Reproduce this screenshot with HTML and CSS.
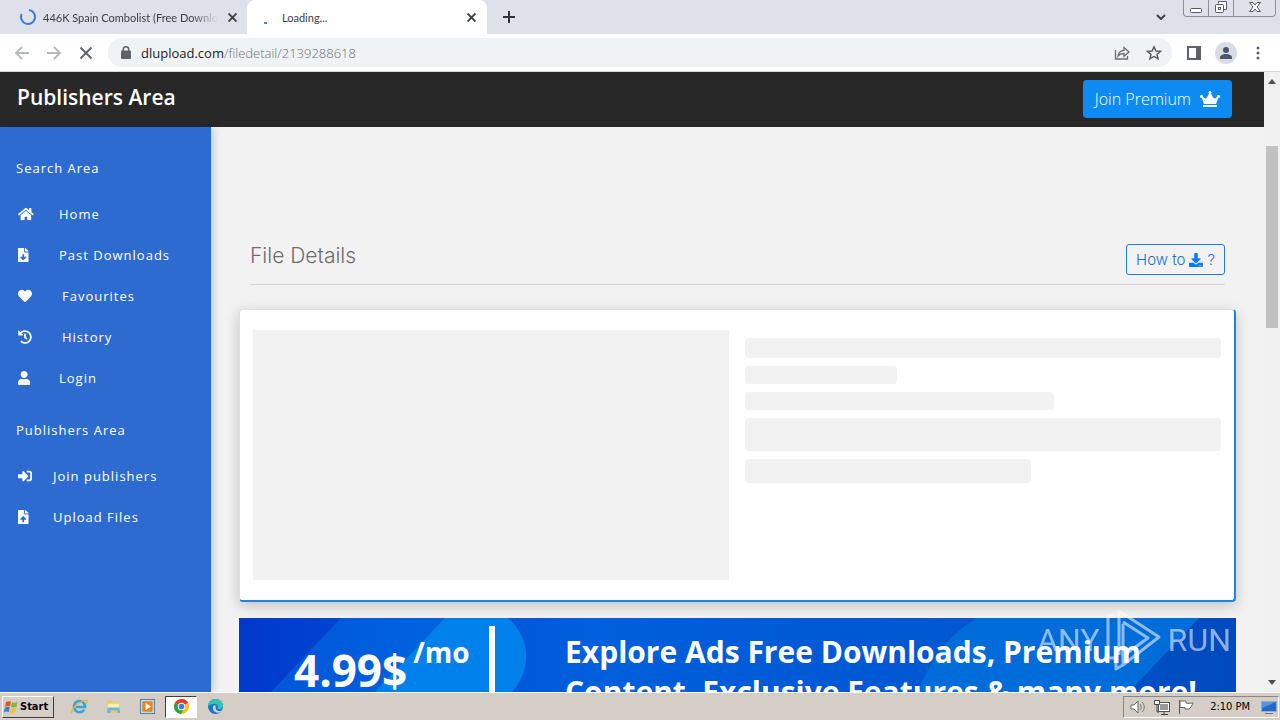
FILE: index.html
```html
<!DOCTYPE html>
<html lang="en">
<head>
    <meta charset="UTF-8">
    <meta name="viewport" content="width=device-width, initial-scale=1.0">
    <title>File Details</title>
    <link rel="stylesheet" href="styles.css">
</head>
<body>

<!-- Browser tabs -->
<div class="tabs">
    <div class="tab">
        <svg class="spinner" viewBox="0 0 16 16"><path d="M9 1A7 7 0 1 1 1.600 5.200" fill="none" stroke="#3f78d0" stroke-width="2"/></svg>
        <span class="tab-title fade">446K Spain Combolist (Free Download)</span>
        <button class="tab-close" aria-label="Close tab"><svg viewBox="0 0 8 8"><path d="M0.500 0.500l7 7M7.500 0.500l-7 7" stroke="#3c4043" stroke-width="1.700"/></svg></button>
    </div>
    <div class="tab active">
        <svg class="spinner" viewBox="0 0 16 16"><rect x="0" y="13" width="3" height="2" fill="#5b7fd0"/></svg>
        <span class="tab-title">Loading...</span>
        <button class="tab-close" aria-label="Close tab"><svg viewBox="0 0 8 8"><path d="M0.500 0.500l7 7M7.500 0.500l-7 7" stroke="#3c4043" stroke-width="1.700"/></svg></button>
    </div>
    <button class="new-tab" aria-label="New tab"><svg viewBox="0 0 12 12"><path d="M6 0v12M0 6h12" stroke="#30343a" stroke-width="2"/></svg></button>
    <button class="tab-search" aria-label="Search tabs"><svg viewBox="0 0 10 6"><path d="M1 1l4 4 4-4" fill="none" stroke="#3c4043" stroke-width="2"/></svg></button>
    <div class="window-buttons">
        <button class="win-small" aria-label="Minimize"><svg viewBox="0 0 16 14"><rect x="2.500" y="8.500" width="11" height="4" rx="1" fill="#fff" stroke="#555b68"/></svg></button>
        <button class="win-small" aria-label="Restore"><svg viewBox="0 0 16 14"><path d="M5.500 3.500v-2h8v8h-3" fill="#fff" stroke="#555b68"/><rect x="2.500" y="4.500" width="8" height="8" rx="1" fill="#fff" stroke="#555b68"/><rect x="5.500" y="7.500" width="2" height="2" fill="none" stroke="#555b68"/></svg></button>
        <button class="win-close" aria-label="Close"><svg viewBox="0 0 16 14"><path d="M2.500 2.500h3.500l2 2.500 2-2.500h3.500L10 7l3.500 4.500H10L8 9l-2 2.500H2.500L6 7z" fill="#fff" stroke="#555b68"/></svg></button>
    </div>
</div>

<!-- Address bar -->
<div class="toolbar">
    <div class="nav-tools">
        <button class="tool" aria-label="Back"><svg viewBox="0 0 16 16"><path d="M15 8H2M8 2L2 8l6 6" fill="none" stroke="#b5b7ba" stroke-width="1.800"/></svg></button>
        <button class="tool" aria-label="Forward"><svg viewBox="0 0 16 16"><path d="M1 8h13M8 2l6 6-6 6" fill="none" stroke="#b5b7ba" stroke-width="1.800"/></svg></button>
        <button class="tool" aria-label="Stop"><svg viewBox="0 0 16 16"><path d="M2.500 2.500l11 11M13.500 2.500l-11 11" fill="none" stroke="#5f6368" stroke-width="1.900"/></svg></button>
    </div>
    <div class="address">
        <svg class="lock" viewBox="0 0 10 13"><rect y="4.500" width="10" height="8.500" rx="1" fill="#5f6368"/><path d="M2.300 5V3.500a2.700 2.700 0 0 1 5.400 0V5" fill="none" stroke="#5f6368" stroke-width="1.500"/></svg>
        <div class="url"><b>dlupload.com</b>/filedetail/2139288618</div>
        <button class="tool" aria-label="Share"><svg viewBox="0 0 16 16"><path d="M1.500 5v9h12v-3" fill="none" stroke="#6b6f74" stroke-width="1.300"/><path d="M4 11c.5-4 2.500-5.500 6-5.700V2.500L15 7l-5 4.300V8.500C7.500 8.400 5.600 9 4 11z" fill="none" stroke="#6b6f74" stroke-width="1.300"/></svg></button>
        <button class="tool" aria-label="Bookmark"><svg viewBox="0 0 16 16"><path d="M8 1.800l1.900 4.200 4.600.4-3.500 3 1.100 4.500L8 11.500l-4.100 2.400L5 9.400l-3.500-3 4.600-.4z" fill="none" stroke="#55595e" stroke-width="1.400"/></svg></button>
    </div>
    <div class="menu-tools">
        <button class="tool" aria-label="Side panel"><svg viewBox="0 0 16 16"><path d="M1 1h14v14H1zM3 3v10h7V3z" fill="#5f6368" fill-rule="evenodd"/></svg></button>
        <button class="tool profile" aria-label="Profile"><svg viewBox="0 0 22 22"><circle cx="11" cy="11" r="11" fill="#d8dce3"/><circle cx="11" cy="8" r="3" fill="#4c566e"/><path d="M5 17v-1.500c0-2 3-3.500 6-3.500s6 1.500 6 3.500V17z" fill="#4c566e"/></svg></button>
        <button class="tool" aria-label="Menu"><svg viewBox="0 0 16 16"><circle cx="8" cy="3" r="1.500" fill="#5f6368"/><circle cx="8" cy="8" r="1.500" fill="#5f6368"/><circle cx="8" cy="13" r="1.500" fill="#5f6368"/></svg></button>
    </div>
</div>

<!-- Page -->
<div class="window">
    <div class="page">
        <header class="header">
            <h1>Publishers Area</h1>
            <button class="premium">Join Premium
                <svg viewBox="0 0 640 512"><path d="M528 448H112c-8.800 0-16 7.200-16 16v32c0 8.800 7.200 16 16 16h416c8.800 0 16-7.200 16-16v-32c0-8.800-7.200-16-16-16zm64-320c-26.500 0-48 21.500-48 48 0 7.100 1.600 13.700 4.400 19.800L476 239.200c-15.400 9.200-35.300 4-44.200-11.600L350.300 85C361 76.200 368 63 368 48c0-26.500-21.500-48-48-48s-48 21.500-48 48c0 15 7 28.200 17.700 37l-81.500 142.600c-8.900 15.600-28.900 20.800-44.200 11.600l-72.300-43.400c2.700-6 4.400-12.700 4.400-19.800 0-26.500-21.500-48-48-48S0 149.500 0 176s21.500 48 48 48c2.600 0 5.200-.4 7.700-.8L128 416h384l72.300-192.800c2.500.4 5.100.8 7.700.8 26.500 0 48-21.500 48-48s-21.500-48-48-48z"/></svg>
            </button>
        </header>
        <div class="body">
            <nav class="sidebar">
                <h2>Search Area</h2>
                <a href="#"><svg viewBox="0 0 576 512"><path d="M280.370 148.260L96 300.110V464a16 16 0 0 0 16 16l112.060-.29a16 16 0 0 0 15.920-16V368a16 16 0 0 1 16-16h64a16 16 0 0 1 16 16v95.640a16 16 0 0 0 16 16.050L464 480a16 16 0 0 0 16-16V300L295.670 148.260a12.190 12.190 0 0 0-15.300 0zM571.600 251.470L488 182.560V44.050a12 12 0 0 0-12-12h-56a12 12 0 0 0-12 12v72.610L318.470 43a48 48 0 0 0-61 0L4.340 251.470a12 12 0 0 0-1.600 16.900l25.500 31A12 12 0 0 0 45.150 301l235.220-193.740a12.190 12.190 0 0 1 15.300 0L530.900 301a12 12 0 0 0 16.900-1.600l25.500-31a12 12 0 0 0-1.700-16.930z"/></svg><span>Home</span></a>
                <a href="#"><svg viewBox="0 0 384 512"><path d="M224 136V0H24C10.700 0 0 10.700 0 24v464c0 13.300 10.700 24 24 24h336c13.300 0 24-10.700 24-24V160H248c-13.200 0-24-10.800-24-24zm76.450 211.360l-96.420 95.700c-6.650 6.610-17.390 6.610-24.040 0l-96.420-95.700C73.420 337.290 80.540 320 94.820 320H160v-80c0-8.840 7.160-16 16-16h32c8.840 0 16 7.160 16 16v80h65.180c14.280 0 21.400 17.290 11.270 27.360zM377 105L279.100 7c-4.500-4.500-10.600-7-17-7H256v128h128v-6.100c0-6.300-2.500-12.400-7-16.900z"/></svg><span>Past Downloads</span></a>
                <a href="#" class="indent"><svg viewBox="0 0 512 512"><path d="M462.300 62.600C407.500 15.900 326 24.300 275.700 76.200L256 96.500l-19.700-20.300C186.100 24.300 104.500 15.900 49.700 62.600c-62.800 53.600-66.100 149.800-9.900 207.900l193.500 199.800c12.500 12.900 32.800 12.900 45.300 0l193.500-199.800c56.300-58.100 53-154.300-9.800-207.900z"/></svg><span>Favourites</span></a>
                <a href="#" class="indent"><svg viewBox="0 0 512 512"><path d="M504 255.531c.253 136.640-111.180 248.372-247.820 248.468-59.015.042-113.223-20.530-155.822-54.911-11.077-8.940-11.905-25.541-1.839-35.607l11.267-11.267c8.609-8.609 22.353-9.551 31.891-1.984C173.062 425.135 212.781 440 256 440c101.705 0 184-82.311 184-184 0-101.705-82.311-184-184-184-48.814 0-93.149 18.969-126.068 49.932l50.754 50.754c10.080 10.080 2.941 27.314-11.313 27.314H24c-8.837 0-16-7.163-16-16V38.627c0-14.254 17.234-21.393 27.314-11.314l49.372 49.372C129.209 34.136 189.552 8 256 8c136.810 0 247.747 110.780 248 247.531zm-180.912 78.784l9.823-12.630c8.138-10.463 6.253-25.542-4.210-33.679L288 256.349V152c0-13.255-10.745-24-24-24h-16c-13.255 0-24 10.745-24 24v135.651l65.409 50.874c10.463 8.137 25.541 6.253 33.679-4.210z"/></svg><span>History</span></a>
                <a href="#"><svg viewBox="0 0 448 512"><path d="M224 256c70.700 0 128-57.300 128-128S294.700 0 224 0 96 57.300 96 128s57.300 128 128 128zm89.600 32h-16.700c-22.200 10.200-46.900 16-72.900 16s-50.600-5.800-72.900-16h-16.700C60.200 288 0 348.200 0 422.400V464c0 26.500 21.500 48 48 48h352c26.500 0 48-21.500 48-48v-41.600c0-74.200-60.200-134.400-134.400-134.400z"/></svg><span>Login</span></a>
                <h2>Publishers Area</h2>
                <a href="#" class="near"><svg viewBox="0 0 512 512"><path d="M416 448h-84c-6.600 0-12-5.400-12-12v-40c0-6.600 5.400-12 12-12h84c17.700 0 32-14.300 32-32V160c0-17.700-14.300-32-32-32h-84c-6.600 0-12-5.400-12-12V76c0-6.600 5.400-12 12-12h84c53 0 96 43 96 96v192c0 53-43 96-96 96zm-47-201L201 79c-15-15-41-4.500-41 17v96H24c-13.300 0-24 10.700-24 24v96c0 13.300 10.700 24 24 24h136v96c0 21.500 26 32 41 17l168-168c9.300-9.400 9.300-24.600 0-34z"/></svg><span>Join publishers</span></a>
                <a href="#" class="near"><svg viewBox="0 0 384 512"><path d="M224 136V0H24C10.700 0 0 10.700 0 24v464c0 13.300 10.700 24 24 24h336c13.300 0 24-10.700 24-24V160H248c-13.200 0-24-10.800-24-24zm65.180 216.010H224v80c0 8.840-7.160 16-16 16h-32c-8.840 0-16-7.160-16-16v-80H94.820c-14.280 0-21.410-17.290-11.270-27.360l96.420-95.700c6.650-6.610 17.390-6.610 24.040 0l96.420 95.700c10.150 10.070 3.030 27.360-11.250 27.360zM377 105L279.100 7c-4.500-4.500-10.600-7-17-7H256v128h128v-6.100c0-6.300-2.500-12.400-7-16.900z"/></svg><span>Upload Files</span></a>
            </nav>
            <main class="content">
                <div class="content-head">
                    <h3>File Details</h3>
                    <button class="howto">How to
                        <svg viewBox="0 0 512 512"><path d="M216 0h80c13.300 0 24 10.700 24 24v168h87.700c17.800 0 26.700 21.500 14.100 34.100L269.700 378.300c-7.500 7.500-19.800 7.500-27.300 0L90.100 226.100c-12.600-12.600-3.700-34.100 14.100-34.100H192V24c0-13.300 10.700-24 24-24zm296 376v112c0 13.300-10.700 24-24 24H24c-13.300 0-24-10.700-24-24V376c0-13.300 10.700-24 24-24h146.700l49 49c20.100 20.100 52.500 20.100 72.600 0l49-49H488c13.300 0 24 10.700 24 24zm-124 88c0-11-9-20-20-20s-20 9-20 20 9 20 20 20 20-9 20-20zm64 0c0-11-9-20-20-20s-20 9-20 20 9 20 20 20 20-9 20-20z"/></svg>
                        ?</button>
                </div>
                <!-- Loading placeholders -->
                <div class="card">
                    <div class="skeleton preview"></div>
                    <div class="lines">
                        <div class="skeleton line-title"></div>
                        <div class="skeleton line-short"></div>
                        <div class="skeleton line-medium"></div>
                        <div class="skeleton line-full"></div>
                        <div class="skeleton line-button"></div>
                    </div>
                </div>
                <div class="banner">
                    <svg class="banner-art" viewBox="0 0 997 74" preserveAspectRatio="none">
                        <defs>
                            <linearGradient id="base"><stop offset="0" stop-color="#0038cb"/><stop offset=".2" stop-color="#0050d8"/><stop offset=".35" stop-color="#005fdc"/><stop offset=".7" stop-color="#0057d2"/><stop offset="1" stop-color="#004abd"/></linearGradient>
                            <linearGradient id="band"><stop offset="0" stop-color="#0056d8"/><stop offset="1" stop-color="#0066e2"/></linearGradient>
                        </defs>
                        <rect width="997" height="74" fill="url(#base)"/>
                        <path d="M102 0H240L140 74H32z" fill="url(#band)"/>
                        <path d="M206 0H269C292 20 293 52 273 74H136z" fill="#0080ea"/>
                        <path d="M738 0H960L890 74H679C690 44 708 18 738 0z" fill="#006cda"/>
                    </svg>
                    <div class="price">4.99$<sup>/mo</sup></div>
                    <div class="divider"></div>
                    <p class="pitch">Explore Ads Free Downloads, Premium<br>Content, Exclusive Features &amp; many more!</p>
                </div>
            </main>
        </div>
    </div>
    <div class="scrollbar">
        <svg viewBox="0 0 8 5"><path d="M0 5l4-5 4 5z"/></svg>
        <div class="thumb"></div>
        <svg viewBox="0 0 8 5"><path d="M0 0l4 5 4-5z"/></svg>
    </div>
    <div class="watermark">
        <span>ANY</span>
        <svg viewBox="0 0 58 64"><g fill="none" stroke="#fff" stroke-width="3" stroke-linejoin="round"><path d="M10 8H3v42h8v11l7-4"/><path d="M14 3l40 26-36 28V38"/><path d="M14 3v44M18 14l25 16-25 18V16"/></g></svg>
        <span>RUN</span>
    </div>
</div>

<!-- Taskbar -->
<div class="taskbar">
    <button class="start">
        <svg viewBox="0 0 16 16"><path d="M2 3c2-1.500 4-1.500 5.500-.5L6.500 7.500C5 6.500 3 6.500 1 8z" fill="#e8542c"/><path d="M8.500 3c2 1 4 1 6-.5L13.500 7.500c-2 1.500-4 1.500-6 .5z" fill="#7cb93c"/><path d="M.8 9c2-1.500 4-1.500 5.500-.5L5 13.500c-1.500-1-3.500-1-5 .5z" fill="#3d7fd6"/><path d="M7.300 9c2 1 4 1 6-.5L12 13.500c-2 1.500-4 1.500-6 .5z" fill="#f6c02c"/></svg>
        Start</button>
    <button class="task" aria-label="Internet Explorer"><svg viewBox="0 0 18 18"><path d="M14 12.500A6 6 0 1 1 15 9.500H5" fill="none" stroke="#38a3dd" stroke-width="2.600"/><path d="M1 16c-2-4 10-14.500 15.500-13.500.8.500.5 2-.5 3.500" fill="none" stroke="#e6b733" stroke-width="1.300"/></svg></button>
    <button class="task" aria-label="Explorer"><svg viewBox="0 0 18 18"><path d="M2 3h5l1 2h8v11H2z" fill="#ecc95c"/><path d="M3 6h12v5H3z" fill="#fbf0ae"/><path d="M3 10h12l1 6h-3v-3H6v3H2z" fill="#6fb7de"/></svg></button>
    <button class="task" aria-label="Media Player"><svg viewBox="0 0 18 18"><rect x="1.500" y="1.500" width="15" height="15" fill="#b9d8ee" stroke="#3f83bd"/><rect x="3.500" y="3.500" width="11" height="11" rx="1" fill="#f08318"/><path d="M7 5l5.500 4L7 13z" fill="#fff"/></svg></button>
    <button class="task pressed" aria-label="Chrome"><svg viewBox="0 0 18 18"><circle cx="9" cy="9" r="8" fill="#fbc116"/><path d="M9 9L2.100 5A8 8 0 0 1 15.900 5z" fill="#e33b2e"/><path d="M9 9L2.100 5A8 8 0 0 0 8.500 17L12 10.500z" fill="#2ba24c"/><path d="M9 5h6.900A8 8 0 0 0 9 1z" fill="#e33b2e"/><circle cx="9" cy="9" r="4" fill="#fff"/><circle cx="9" cy="9" r="3" fill="#3a7de8"/></svg></button>
    <button class="task" aria-label="Edge"><svg viewBox="0 0 18 18"><circle cx="9" cy="9" r="8" fill="#1479c8"/><path d="M1 9C1 4 5 1 9 1c5 0 8 3.500 8 7 0 3-3 4.500-6 3 1.500-2 0-5-3-5-3.500 0-6 1.500-7 3z" fill="#36c5b5"/><path d="M7 8c-2 3 0 7 4 7.500 2 .2 4-.8 5-2-3 1-7 0-7-3.500 0-.8.2-1.500.5-2z" fill="#d6d0c8"/></svg></button>
    <div class="tray">
        <svg viewBox="0 0 18 18"><path d="M2 7h3l4-4v12l-4-4H2z" fill="#fff" stroke="#666" stroke-width="1"/><path d="M11 6c1.500 2 1.500 4 0 6M13 4c3 3 3 7 0 10" fill="none" stroke="#777"/></svg>
        <svg viewBox="0 0 18 18"><rect x="5.500" y="4.500" width="11" height="9" fill="#fff" stroke="#555"/><rect x="7" y="6" width="8" height="6" fill="#999"/><path d="M8 16.500h7M11 14v2M4 7v7h2" fill="none" stroke="#444"/><path d="M1.500 2.500h5v4h-5z" fill="#fff" stroke="#444"/></svg>
        <svg viewBox="0 0 18 18"><path d="M2.500 2v14" stroke="#555"/><path d="M3 3h6v2c2 1 4 0 7 0-1 2-2 5-4 6H8V9.500H3z" fill="#fff" stroke="#666"/></svg>
        <span>2:10 PM</span>
        <svg viewBox="0 0 18 18"><rect x="1.500" y="3.500" width="15" height="10" fill="#2868c8" stroke="#8aaedb"/><path d="M2 4h14L2 10z" fill="#5a93df"/><path d="M5 15.500h8" stroke="#777"/></svg>
    </div>
</div>

</body>
</html>
```
FILE: styles.css
```css
* {
    box-sizing: border-box;
}

body {
    margin: 0;
    height: 100vh;
    display: flex;
    flex-direction: column;
    overflow: hidden;
    font-family: "Open Sans", sans-serif;
}

button {
    padding: 0;
    border: none;
    background: none;
    font: inherit;
    cursor: pointer;
}

svg {
    display: block;
    flex-shrink: 0;
}

/* Tabs */
.tabs {
    display: flex;
    height: 34px;
    background-color: #dee1e9;
    color: #3c4043;
    font-family: "Lato", sans-serif;
    font-size: 11px;
}

.tab {
    display: flex;
    align-items: center;
    width: 247px;
    padding: 0 10px 0 20px;
}

.tab.active {
    width: 240px;
    padding: 0 11px 0 17px;
    background-color: #fff;
    border-radius: 8px 8px 0 0;
}

.spinner {
    width: 16px;
    height: 16px;
}

.tab-title {
    flex: 1;
    margin-left: 7px;
    white-space: nowrap;
    overflow: hidden;
}

.active .tab-title {
    margin-left: 2px;
}

.fade {
    -webkit-mask-image: linear-gradient(to right, #000 85%, transparent);
    mask-image: linear-gradient(to right, #000 85%, transparent);
}

.tab-close {
    padding: 4px 0 4px 10px;
}

.tab-close svg {
    width: 9px;
    height: 9px;
}

.new-tab {
    margin-left: 16px;
}

.new-tab svg {
    width: 12px;
    height: 12px;
}

.tab-search {
    margin-left: auto;
}

.tab-search svg {
    width: 10px;
    height: 6px;
}

.window-buttons {
    display: flex;
    height: 17px;
    margin: 0 4px 0 17px;
    border: 1px solid #8b909d;
    border-top: none;
    border-radius: 0 0 4px 4px;
}

.window-buttons button {
    display: flex;
    justify-content: center;
    width: 41px;
}

.window-buttons .win-small {
    width: 25px;
    border-right: 1px solid #8b909d;
}

.window-buttons svg {
    width: 16px;
    height: 14px;
}

/* Toolbar */
.toolbar {
    display: flex;
    align-items: center;
    height: 38px;
    padding: 0 14px;
    gap: 14px;
    background-color: #fff;
    border-bottom: 1px solid #d5d7da;
}

.nav-tools {
    display: flex;
    gap: 16px;
}

.menu-tools {
    display: flex;
    align-items: center;
    gap: 13px;
}

.tool svg {
    width: 16px;
    height: 16px;
}

.profile svg {
    width: 22px;
    height: 22px;
}

.address {
    flex: 1;
    display: flex;
    align-items: center;
    gap: 16px;
    height: 29px;
    padding: 0 10px 0 13px;
    border-radius: 14px;
    background-color: #f0f3f5;
}

.lock {
    width: 10px;
    height: 13px;
    margin-right: -6px;
}

.url {
    flex: 1;
    color: #6b6f74;
    font-size: 13px;
    font-weight: 300;
}

.url b {
    color: #202124;
    font-weight: 400;
}

/* Page */
.window {
    position: relative;
    flex: 1;
    display: flex;
    min-height: 0;
}

.page {
    flex: 1;
    display: flex;
    flex-direction: column;
    min-width: 0;
    overflow: hidden;
    background-color: #f2f2f2;
}

.header {
    display: flex;
    align-items: center;
    justify-content: space-between;
    height: 55px;
    flex-shrink: 0;
    padding: 0 32px 2px 17px;
    background-color: #282828;
    color: #fff;
}

.header h1 {
    margin: 0 0 4px;
    font-size: 21px;
    font-weight: 600;
}

.premium {
    display: flex;
    align-items: center;
    gap: 9px;
    height: 38px;
    padding: 0 12px;
    border-radius: 4px;
    background-color: #0d8bf2;
    color: #fff;
    font-size: 16px;
    font-weight: 300;
}

.premium svg {
    width: 20px;
    height: 16px;
    fill: #fff;
}

.body {
    flex: 1;
    display: flex;
    min-height: 0;
}

.sidebar {
    width: 211px;
    flex-shrink: 0;
    padding-top: 9px;
    background-color: #2e6bd0;
    box-shadow: 2px 0 8px rgba(0, 0, 0, 0.2);
    color: #fff;
    font-size: 13px;
    letter-spacing: 1px;
}

.sidebar h2 {
    margin: 22px 16px 15px;
    font-size: 13px;
    font-weight: 400;
    line-height: 20px;
}

.sidebar a {
    display: grid;
    grid-template-columns: 41px 1fr;
    align-items: center;
    height: 41px;
    padding-left: 18px;
    color: #fff;
    text-decoration: none;
}

.sidebar a.indent {
    grid-template-columns: 44px 1fr;
}

.sidebar a.near {
    grid-template-columns: 35px 1fr;
}

.sidebar svg {
    height: 14px;
    fill: #fff;
}

.content {
    flex: 1;
    min-width: 0;
    padding: 117px 28px 0;
}

.content-head {
    display: flex;
    justify-content: space-between;
    margin: 0 11px 24px;
    padding-bottom: 9px;
    border-bottom: 1px solid #d6d6d6;
}

.content-head h3 {
    margin: 0;
    color: #6c6c70;
    font-family: "Inter", sans-serif;
    font-size: 21px;
    font-weight: 300;
    line-height: 24px;
}

.howto {
    display: flex;
    align-items: center;
    gap: 4px;
    height: 31px;
    padding: 0 9px;
    border: 1px solid #1a7fe8;
    border-radius: 3px;
    color: #1a6fd6;
    font-family: "Inter", sans-serif;
    font-size: 15px;
    font-weight: 300;
}

.howto svg {
    width: 14px;
    height: 14px;
    fill: #0a7cf5;
}

.card {
    display: grid;
    grid-template-columns: 1fr 1fr;
    gap: 16px;
    padding: 20px 13px;
    border: 1px solid #dfdfdf;
    border-right: 2px solid #1c86dc;
    border-bottom: 2px solid #1c86dc;
    border-radius: 4px;
    background-color: #fff;
    box-shadow: 0 4px 14px rgba(0, 0, 0, 0.2);
}

.skeleton {
    border-radius: 4px;
    background-color: #f2f2f2;
}

.preview {
    height: 250px;
    border-radius: 0;
}

.lines {
    display: flex;
    flex-direction: column;
    gap: 8px;
    padding-top: 8px;
}

.line-title {
    height: 20px;
}

.line-short {
    width: 32%;
    height: 18px;
}

.line-medium {
    width: 65%;
    height: 18px;
}

.line-full {
    height: 33px;
}

.line-button {
    width: 60%;
    height: 24px;
}

.banner {
    position: relative;
    display: flex;
    height: 240px;
    margin-top: 16px;
    padding-left: 55px;
    background-color: #0050d0;
    color: #fff;
    font-weight: 700;
}

.banner-art {
    position: absolute;
    top: 0;
    left: 0;
    width: 100%;
    height: 74px;
}

.price {
    position: relative;
    width: 195px;
    padding-top: 22px;
    font-size: 44px;
    line-height: 60px;
    white-space: nowrap;
}

.price sup {
    margin-left: 6px;
    font-size: 28px;
    line-height: 0;
    vertical-align: 24px;
}

.divider {
    position: relative;
    width: 6px;
    margin: 8px 70px 8px 0;
    background-color: #fff;
}

.pitch {
    position: relative;
    margin: 14px 0 0;
    font-size: 30px;
    line-height: 40px;
    white-space: nowrap;
}

/* Scrollbar */
.scrollbar {
    display: flex;
    flex-direction: column;
    align-items: center;
    width: 16px;
    padding: 7px 0;
    background-color: #f1f1f1;
}

.scrollbar svg {
    width: 8px;
    height: 5px;
    fill: #505050;
}

.thumb {
    width: 12px;
    height: 30%;
    margin: 62px 0 auto;
    background-color: #c1c1c1;
}

.watermark {
    position: absolute;
    right: 49px;
    bottom: 20px;
    display: flex;
    align-items: center;
    gap: 5px;
    color: #fff;
    font-family: "Roboto", sans-serif;
    font-size: 32px;
    opacity: 0.55;
}

.watermark svg {
    width: 58px;
    height: 64px;
}

/* Taskbar */
.taskbar {
    display: flex;
    align-items: center;
    height: 28px;
    padding: 0 1px 0 2px;
    border-top: 1px solid #fff;
    background-color: #d5cec6;
    font-family: "DejaVu Sans Condensed", "DejaVu Sans", sans-serif;
    font-size: 11px;
}

.start {
    display: flex;
    align-items: center;
    gap: 1px;
    height: 22px;
    width: 52px;
    margin-right: 9px;
    padding-left: 1px;
    border: 1px solid;
    border-color: #fff #404040 #404040 #fff;
    font-weight: 700;
}

.start svg {
    width: 15px;
    height: 16px;
}

.task {
    display: flex;
    align-items: center;
    justify-content: center;
    width: 32px;
    height: 22px;
    margin-right: 2px;
}

.task svg {
    width: 17px;
    height: 17px;
}

.pressed {
    border: 1px solid;
    border-color: #404040 #fff #fff #404040;
    background-color: #fff;
}

.tray {
    display: flex;
    align-items: center;
    gap: 6px;
    height: 22px;
    margin-left: auto;
    padding: 0 0 0 5px;
    border: 1px solid;
    border-color: #888 #fff #fff #888;
}

.tray svg {
    width: 18px;
    height: 18px;
}

.tray span {
    margin: 0 4px 0 9px;
}
```
